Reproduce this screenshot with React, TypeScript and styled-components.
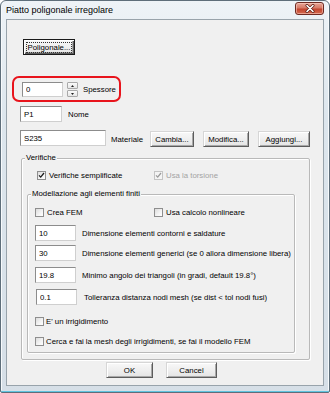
import React from 'react';
import styled, { createGlobalStyle } from 'styled-components';

const Global = createGlobalStyle`
  html, body { margin: 0; padding: 0; background: #fff; }
  body { font-family: "Liberation Sans", Arial, sans-serif; font-size: 7.8px; color: #000; }
  * { box-sizing: border-box; }
`;

const FONT = `"Liberation Sans", Arial, sans-serif`;
const FS = '7.8px';

const Window = styled.div`
  width: 330px;
  height: 393px;
  border: 1px solid #5e6e7a;
  border-radius: 6px 6px 2px 2px;
  background: linear-gradient(180deg, #eef3f7 0%, #dde6ed 30%, #d6dfe7 100%);
  padding: 0 5px 6px 5px;
  display: flex;
  flex-direction: column;
  box-shadow: inset 0 -1px 0 #5fc4df, inset 1px 0 0 #f7fafc, inset -1px 0 0 #f7fafc;
`;

const TitleBar = styled.div`
  height: 18px;
  display: flex;
  align-items: flex-start;
  padding-top: 1px;
`;

const TitleText = styled.div`
  font-family: ${FONT};
  font-size: 9px;
  line-height: 16px;
  color: #000;
  flex: 1;
`;

const CloseBtn = styled.div`
  width: 29px;
  height: 13px;
  border-radius: 3px;
  border: 1px solid #6d2a22;
  background: linear-gradient(180deg, #e8a596 0%, #d77a67 45%, #c2452f 55%, #d4694f 100%);
  box-shadow: inset 0 0 0 1px rgba(255, 220, 210, 0.5);
  display: flex;
  align-items: center;
  justify-content: center;
`;

const Client = styled.div`
  flex: 1;
  border: 1px solid #98a3ab;
  background: #f0f0f0;
  display: flex;
  flex-direction: column;
  align-items: flex-start;
`;

const Button = styled.button<{ $w: number; $default?: boolean }>`
  width: ${(p) => p.$w}px;
  height: 16px;
  padding: 0;
  margin: 0;
  font-family: ${FONT};
  font-size: ${FS};
  color: #000;
  background: linear-gradient(180deg, #f8f8f8 0%, #efefef 50%, #e4e4e4 100%);
  border: 1px solid;
  border-color: ${(p) => (p.$default ? '#1a1a1a' : '#d6d6d6 #5c5c5c #5c5c5c #d6d6d6')};
  box-shadow: ${(p) =>
    p.$default
      ? 'inset 1px 1px 0 #fff, inset -1px -1px 0 #5c5c5c, inset -2px -2px 0 #a8a8a8'
      : 'inset 1px 1px 0 #fff, inset -1px -1px 0 #a8a8a8'};
  display: flex;
  align-items: center;
  justify-content: center;
  flex-shrink: 0;
`;

const FocusText = styled.span`
  outline: 1px dotted #333;
  outline-offset: 0;
  padding: 0 1px;
  line-height: 9px;
`;

const TextBox = styled.input<{ $w: number; $h?: number }>`
  width: ${(p) => p.$w}px;
  height: ${(p) => p.$h ?? 16}px;
  margin: 0;
  padding: 0 0 0 3px;
  font-family: ${FONT};
  font-size: ${FS};
  color: #000;
  background: #fff;
  border: 1px solid;
  border-color: #8c8c8c #cfcfcf #cfcfcf #8c8c8c;
  outline: none;
  flex-shrink: 0;
`;

const Label = styled.span<{ $gray?: boolean; $w?: number; $dy?: number }>`
  font-family: ${FONT};
  font-size: ${FS};
  color: ${(p) => (p.$gray ? '#a3a3a3' : '#000')};
  white-space: nowrap;
  ${(p) => (p.$w ? `width: ${p.$w}px; flex-shrink: 0;` : '')}
  ${(p) => (p.$dy ? `position: relative; top: ${p.$dy}px;` : '')}
`;

const Row = styled.div<{ $mt: number; $ml: number; $gap?: number; $align?: string }>`
  display: flex;
  align-items: ${(p) => p.$align ?? 'center'};
  margin-top: ${(p) => p.$mt}px;
  margin-left: ${(p) => p.$ml}px;
  gap: ${(p) => p.$gap ?? 0}px;
`;

const Highlight = styled.div`
  margin-top: 21px;
  margin-left: 5px;
  width: 109px;
  height: 26px;
  border: 2px solid #e8141c;
  border-radius: 7px;
  display: flex;
  align-items: flex-start;
  padding: 4px 0 0 8px;
`;

const Spin = styled.div`
  width: 11px;
  height: 15px;
  margin-left: 4px;
  display: flex;
  flex-direction: column;
  gap: 1px;
`;

const SpinHalf = styled.div`
  flex: 1;
  background: linear-gradient(180deg, #fbfbfb, #e6e6e6);
  border: 1px solid #a9a9a9;
  border-radius: 1px;
  display: flex;
  align-items: center;
  justify-content: center;
`;

const Group = styled.div<{ $mt: number; $ml: number; $w: number; $h: number }>`
  position: relative;
  margin-top: ${(p) => p.$mt}px;
  margin-left: ${(p) => p.$ml}px;
  width: ${(p) => p.$w}px;
  height: ${(p) => p.$h}px;
  border: 1px solid #b9b9b9;
  box-shadow: inset 1px 1px 0 #fff, 1px 1px 0 #fff;
  border-radius: 2px;
  display: flex;
  flex-direction: column;
  align-items: flex-start;
`;

const Legend = styled.span`
  position: absolute;
  top: -6px;
  left: 3px;
  padding: 0 1px;
  background: #f0f0f0;
  font-family: ${FONT};
  font-size: ${FS};
  line-height: 10px;
  color: #000;
`;

const Box = styled.span<{ $disabled?: boolean }>`
  width: 9px;
  height: 9px;
  flex-shrink: 0;
  border: 1px solid ${(p) => (p.$disabled ? '#c4c4c4' : '#8e8e8e')};
  background: ${(p) =>
    p.$disabled ? '#f4f4f4' : 'linear-gradient(135deg, #dcdcdc 0%, #f4f4f4 60%, #ffffff 100%)'};
  display: flex;
  align-items: center;
  justify-content: center;
`;

const CheckCell = styled.div<{ $w?: number; $gap?: number }>`
  display: flex;
  align-items: center;
  gap: ${(p) => p.$gap ?? 3}px;
  height: 13px;
  ${(p) => (p.$w ? `width: ${p.$w}px; flex-shrink: 0;` : '')}
`;

const Footer = styled.div`
  display: flex;
  gap: 13px;
  margin-top: 2px;
  margin-left: 99px;
`;

function Check({
  label,
  checked,
  disabled,
  w,
  gap,
}: {
  label: string;
  checked?: boolean;
  disabled?: boolean;
  w?: number;
  gap?: number;
}) {
  return (
    <CheckCell $w={w} $gap={gap}>
      <Box $disabled={disabled}>
        {checked && (
          <svg width="7" height="7" viewBox="0 0 7 7">
            <path
              d="M1 3.4 L2.7 5.1 L6 1"
              fill="none"
              stroke={disabled ? '#9a9a9a' : '#1b1b1b'}
              strokeWidth="1.3"
            />
          </svg>
        )}
      </Box>
      <Label $gray={disabled}>{label}</Label>
    </CheckCell>
  );
}

function FieldRow({
  mt,
  ml,
  value,
  label,
  gap,
}: {
  mt: number;
  ml: number;
  value: string;
  label: string;
  gap: number;
}) {
  return (
    <Row $mt={mt} $ml={ml} $gap={gap}>
      <TextBox $w={41} defaultValue={value} readOnly />
      <Label>{label}</Label>
    </Row>
  );
}

export default function App() {
  return (
    <>
      <Global />
      <Window>
        <TitleBar>
          <TitleText>Piatto poligonale irregolare</TitleText>
          <CloseBtn>
            <svg width="10" height="9" viewBox="0 0 10 9">
              <path d="M2 1.5 L8 7.5 M8 1.5 L2 7.5" stroke="#5a1d15" strokeWidth="3" strokeLinecap="round" />
              <path d="M2 1.5 L8 7.5 M8 1.5 L2 7.5" stroke="#ffffff" strokeWidth="1.6" strokeLinecap="round" />
            </svg>
          </CloseBtn>
        </TitleBar>
        <Client>
          <Row $mt={19} $ml={16}>
            <Button $w={52} $default>
              <FocusText>Poligonale...</FocusText>
            </Button>
          </Row>

          <Highlight>
            <TextBox $w={41} $h={15} defaultValue="0" readOnly />
            <Spin>
              <SpinHalf>
                <svg width="3" height="2" viewBox="0 0 3 2">
                  <path d="M0 2 L1.5 0 L3 2 Z" fill="#222" />
                </svg>
              </SpinHalf>
              <SpinHalf>
                <svg width="3" height="2" viewBox="0 0 3 2">
                  <path d="M0 0 L1.5 2 L3 0 Z" fill="#222" />
                </svg>
              </SpinHalf>
            </Spin>
            <Label style={{ marginLeft: 5, lineHeight: '15px' }}>Spessore</Label>
          </Highlight>

          <Row $mt={4} $ml={13} $gap={6}>
            <TextBox $w={42} defaultValue="P1" readOnly />
            <Label>Nome</Label>
          </Row>

          <Row $mt={8} $ml={13} $align="flex-start">
            <TextBox $w={86} defaultValue="S235" readOnly />
            <Label $w={39} $dy={5} style={{ marginLeft: 5 }}>
              Materiale
            </Label>
            <Row $mt={1} $ml={0} $gap={9}>
              <Button $w={44}>Cambia...</Button>
              <Button $w={46}>Modifica...</Button>
              <Button $w={52}>Aggiungi...</Button>
            </Row>
          </Row>

          <Group $mt={11} $ml={14} $w={289} $h={202}>
            <Legend>Verifiche</Legend>
            <Row $mt={10} $ml={15}>
              <Check label="Verifiche semplificate" checked w={117} />
              <Check label="Usa la torsione" checked disabled />
            </Row>

            <Group $mt={12} $ml={5} $w={268} $h={159}>
              <Legend>Modellazione agli elementi finiti</Legend>
              <Row $mt={11} $ml={7}>
                <Check label="Crea FEM" w={119} />
                <Check label="Usa calcolo nonlineare" />
              </Row>
              <FieldRow mt={6} ml={7} gap={6} value="10" label="Dimensione elementi contorni e saldature" />
              <FieldRow mt={4} ml={7} gap={6} value="30" label="Dimensione elementi generici (se 0 allora dimensione libera)" />
              <FieldRow mt={6} ml={7} gap={6} value="19.8" label="Minimo angolo dei triangoli (in gradi, default 19.8°)" />
              <FieldRow mt={6} ml={8} gap={7} value="0.1" label="Tolleranza distanza nodi mesh (se dist < tol nodi fusi)" />
              <Row $mt={10} $ml={7}>
                <Check label="E' un irrigidimento" gap={2} />
              </Row>
              <Row $mt={7} $ml={7}>
                <Check label="Cerca e fai la mesh degli irrigidimenti, se fai il modello FEM" gap={2} />
              </Row>
            </Group>
          </Group>

          <Footer>
            <Button $w={47}>OK</Button>
            <Button $w={51}>Cancel</Button>
          </Footer>
        </Client>
      </Window>
    </>
  );
}
